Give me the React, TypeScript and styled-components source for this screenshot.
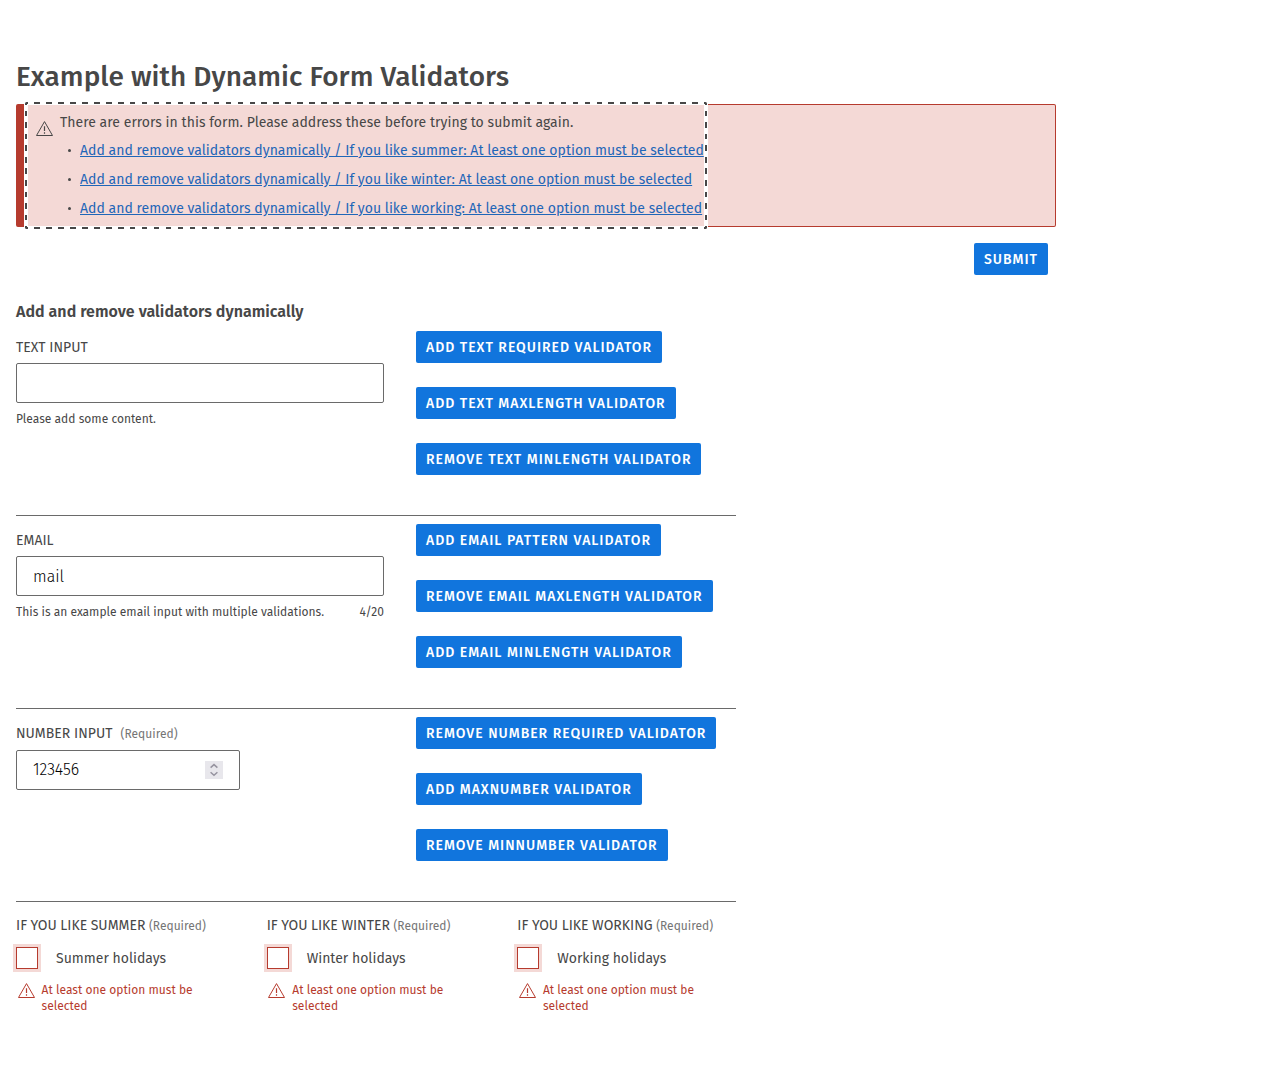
import React from "react";
import styled, { createGlobalStyle } from "styled-components";

const ink = "#474747";
const line = "#6a6a6a";
const danger = "#b63b2e";
const dangerSoft = "#f4d9d6";
const blue = "#1175dd";

const Global = createGlobalStyle`
  * { box-sizing: border-box; }
  body {
    margin: 0;
    background: #fff;
    color: ${ink};
    font: 400 14px/16px "Fira Sans", "Noto Sans", sans-serif;
  }
`;

const Page = styled.main`
  width: 1072px;
  padding: 59px 16px 40px;
`;

const Title = styled.h1`
  margin: 0 0 9px;
  font-size: 28px;
  font-weight: 500;
  line-height: 36px;
  letter-spacing: 0.03px;
`;

const Alert = styled.section`
  display: flex;
  height: 123px;
  padding-left: 4px;
  background: ${dangerSoft};
  border: 1px solid ${danger};
  border-left-width: 8px;
  border-radius: 2px;
`;

const dash = (angle: string, period: number) =>
  `repeating-linear-gradient(${angle}, ${ink} 0 2.8px, transparent 2.8px ${period - 2.8}px, ${ink} ${period - 2.8}px ${period}px)`;

const AlertBody = styled.div`
  position: relative;
  display: flex;
  width: 676px;
  padding: 10px 0 0 8px;
  box-shadow: 0 0 0 4px #fff;

  /* focus ring with evenly distributed dashes */
  &::after {
    content: "";
    position: absolute;
    inset: -3px;
    border-radius: 1.5px;
    pointer-events: none;
    background:
      ${dash("90deg", 682 / 57)} top / 100% 2px no-repeat,
      ${dash("90deg", 682 / 57)} bottom / 100% 2px no-repeat,
      ${dash("180deg", 127 / 11)} left / 2px 100% no-repeat,
      ${dash("180deg", 127 / 11)} right / 2px 100% no-repeat;
  }
`;

const AlertIconSlot = styled.div`
  flex: none;
  width: 24px;
  padding-top: 5px;
`;

const AlertText = styled.p`
  margin: 0 0 12px;
  letter-spacing: 0.038px;
`;

const ErrorList = styled.ul`
  list-style: none;
  margin: 0;
  padding: 0;
  display: grid;
  gap: 13px;
`;

const ErrorItem = styled.li`
  display: flex;
  align-items: center;
  height: 16px;
  padding-left: 8px;
  white-space: nowrap;

  &::before {
    content: "";
    width: 3px;
    height: 3px;
    margin: 0 9px 1px 0;
    border-radius: 50%;
    background: ${ink};
  }
`;

const ErrorLink = styled.a`
  color: #1f66b8;
  letter-spacing: 0.016px;
  text-decoration: underline;
`;

const Actions = styled.div`
  display: flex;
  justify-content: flex-end;
  padding: 16px 8px 29px;
`;

const Button = styled.button`
  height: 32px;
  padding: 2px 10px 0;
  border: 0;
  border-radius: 2px;
  background: ${blue};
  color: #fff;
  font: 500 14px/16px "Fira Sans", "Noto Sans", sans-serif;
  letter-spacing: 0.99px;
  text-transform: uppercase;
  white-space: nowrap;
`;

const Subtitle = styled.h2`
  margin: 0 0 11px;
  font-size: 16px;
  font-weight: 600;
  line-height: 16px;
  letter-spacing: 0.03px;
`;

const Section = styled.section`
  display: grid;
  grid-template-columns: 368px 320px;
  column-gap: 32px;
  width: 720px;
  height: 185px;
  margin-bottom: 8px;
  border-bottom: 1px solid ${line};
`;

const ButtonStack = styled.div`
  display: flex;
  flex-direction: column;
  align-items: flex-start;
  gap: 24px;
`;

const Field = styled.div`
  display: flex;
  flex-direction: column;
`;

const Label = styled.label<{ $height?: number }>`
  display: flex;
  align-items: baseline;
  gap: 8px;
  height: ${(p) => p.$height ?? 32}px;
  padding-top: 9px;
  text-transform: uppercase;
  letter-spacing: 0.02px;
`;

const Required = styled.span`
  color: #757575;
  font-size: 12px;
  text-transform: none;
`;

const InputBox = styled.div<{ $width: number; $offset?: number }>`
  display: flex;
  align-items: center;
  justify-content: space-between;
  width: ${(p) => p.$width}px;
  height: 40px;
  padding: ${(p) => p.$offset ?? 0}px 16px 0;
  border: 1px solid ${line};
  border-radius: 2px;
`;

const Input = styled.input`
  flex: 1;
  min-width: 0;
  padding: 0;
  border: 0;
  background: transparent;
  color: #000;
  font: 300 16px/20px "Fira Sans", "Noto Sans", sans-serif;
`;

const Spinner = styled.span`
  display: block;
  width: 18px;
  height: 18px;
  background: #e8e7ec;

  svg {
    display: block;
  }
`;

const Hint = styled.div`
  display: flex;
  justify-content: space-between;
  margin-top: 8px;
  font-size: 12px;
  letter-spacing: 0.015px;
`;

const ChoiceRow = styled.section`
  display: grid;
  grid-template-columns: repeat(3, 1fr);
  column-gap: 32px;
  width: 720px;
  padding-top: 8px;
`;

const Legend = styled.div`
  height: 29px;
  white-space: nowrap;
  word-spacing: -0.15px;
`;

const LegendText = styled.span`
  text-transform: uppercase;
`;

const CheckLabel = styled.label`
  display: flex;
  align-items: center;
  gap: 18px;
  height: 22px;
`;

const CheckText = styled.span`
  padding-top: 2px;
`;

const Checkbox = styled.span`
  width: 22px;
  height: 22px;
  border: 1px solid ${danger};
  background: #fff;
  box-shadow: 0 0 0 3px ${dangerSoft};
`;

const FieldError = styled.div`
  display: flex;
  gap: 6px;
  margin-top: 13px;
  padding-left: 1.6px;
  color: ${danger};
  font-size: 12px;
  letter-spacing: 0.015px;

  svg {
    flex: none;
  }
`;

function WarningIcon({ color }: { color: string }) {
  return (
    <svg width="18" height="17" viewBox="0 0 18 17" fill="none">
      <path d="M8.5 1.6 16.5 15.5H.5Z" stroke={color} strokeLinejoin="round" />
      <path d="M8.5 6.2v4.9M8.5 12.2v1.5" stroke={color} strokeWidth="1.2" />
    </svg>
  );
}

const errors = ["summer", "winter", "working"];

const choices = [
  { legend: "If you like summer", option: "Summer holidays" },
  { legend: "If you like winter", option: "Winter holidays" },
  { legend: "If you like working", option: "Working holidays" },
];

function Buttons({ labels }: { labels: string[] }) {
  return (
    <ButtonStack>
      {labels.map((label) => (
        <Button key={label}>{label}</Button>
      ))}
    </ButtonStack>
  );
}

export default function App() {
  return (
    <>
      <Global />
      <Page>
        <Title>Example with Dynamic Form Validators</Title>
        <Alert>
          <AlertBody>
            <AlertIconSlot>
              <WarningIcon color={ink} />
            </AlertIconSlot>
            <div>
              <AlertText>There are errors in this form. Please address these before trying to submit again.</AlertText>
              <ErrorList>
                {errors.map((name) => (
                  <ErrorItem key={name}>
                    <ErrorLink href="#">
                      {`Add and remove validators dynamically / If you like ${name}: At least one option must be selected`}
                    </ErrorLink>
                  </ErrorItem>
                ))}
              </ErrorList>
            </div>
          </AlertBody>
        </Alert>
        <Actions>
          <Button>Submit</Button>
        </Actions>
        <Subtitle>Add and remove validators dynamically</Subtitle>
        <Section>
          <Field>
            <Label htmlFor="text">Text input</Label>
            <InputBox $width={368}>
              <Input id="text" />
            </InputBox>
            <Hint>Please add some content.</Hint>
          </Field>
          <Buttons
            labels={["Add text required validator", "Add text maxlength validator", "Remove text minlength validator"]}
          />
        </Section>
        <Section>
          <Field>
            <Label htmlFor="email">Email</Label>
            <InputBox $width={368} $offset={2}>
              <Input id="email" defaultValue="mail" />
            </InputBox>
            <Hint>
              <span>This is an example email input with multiple validations.</span>
              <span>4/20</span>
            </Hint>
          </Field>
          <Buttons
            labels={["Add email pattern validator", "Remove email maxlength validator", "Add email minlength validator"]}
          />
        </Section>
        <Section>
          <Field>
            <Label htmlFor="number" $height={33}>
              Number input <Required>(Required)</Required>
            </Label>
            <InputBox $width={224}>
              <Input id="number" defaultValue="123456" />
              <Spinner>
                <svg width="18" height="18" viewBox="0 0 18 18" fill="none" stroke="#96939f" strokeWidth="1.5">
                  <path d="M5.6 6.6 9 3.6l3.4 3M5.6 11.2 9 14.2l3.4-3" />
                </svg>
              </Spinner>
            </InputBox>
          </Field>
          <Buttons labels={["Remove number required validator", "Add maxnumber validator", "Remove minnumber validator"]} />
        </Section>
        <ChoiceRow>
          {choices.map(({ legend, option }) => (
            <div key={legend}>
              <Legend>
                <LegendText>{legend}</LegendText> <Required>(Required)</Required>
              </Legend>
              <CheckLabel>
                <Checkbox role="checkbox" aria-checked="false" />
                <CheckText>{option}</CheckText>
              </CheckLabel>
              <FieldError>
                <WarningIcon color={danger} />
                <span>At least one option must be selected</span>
              </FieldError>
            </div>
          ))}
        </ChoiceRow>
      </Page>
    </>
  );
}
